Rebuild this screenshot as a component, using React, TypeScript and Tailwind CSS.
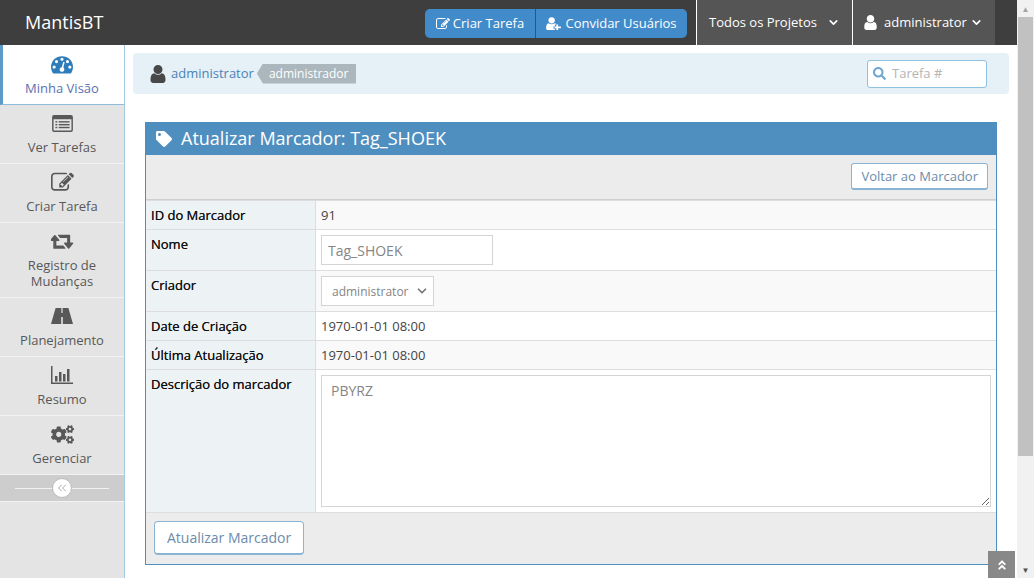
import { ChevronDown, ChevronsLeft } from 'lucide-react';
import { FaAngleDoubleUp, FaCogs, FaSearch, FaTag } from 'react-icons/fa';

type IconProps = { className?: string };

// Font Awesome 4 shapes, the icon packages only carry the newer redraws
function GaugeIcon({ className }: IconProps) {
  return (
    <svg viewBox="0 0 1792 1792" fill="currentColor" className={className}>
      <path d="M384 1152q0-53-37.5-90.5t-90.5-37.5-90.5 37.5-37.5 90.5 37.5 90.5 90.5 37.5 90.5-37.5 37.5-90.5zm192-448q0-53-37.5-90.5t-90.5-37.5-90.5 37.5-37.5 90.5 37.5 90.5 90.5 37.5 90.5-37.5 37.5-90.5zm428 481l101-382q6-26-7.5-48.5t-38.5-29.5-48 6.5-30 39.5l-101 382q-60 5-107 43.5t-63 98.5q-20 77 20 146t117 89 146-20 89-117q16-60-6-117t-72-91zm660-33q0-53-37.5-90.5t-90.5-37.5-90.5 37.5-37.5 90.5 37.5 90.5 90.5 37.5 90.5-37.5 37.5-90.5zm-640-640q0-53-37.5-90.5t-90.5-37.5-90.5 37.5-37.5 90.5 37.5 90.5 90.5 37.5 90.5-37.5 37.5-90.5zm448 192q0-53-37.5-90.5t-90.5-37.5-90.5 37.5-37.5 90.5 37.5 90.5 90.5 37.5 90.5-37.5 37.5-90.5zm320 448q0 261-141 483-19 29-54 29h-1402q-35 0-54-29-141-221-141-483 0-182 71-348t191-286 286-191 348-71 348 71 286 191 191 286 71 348z" />
    </svg>
  );
}

function ListAltIcon({ className }: IconProps) {
  return (
    <svg viewBox="0 0 22 18" fill="currentColor" className={className}>
      <path
        fillRule="evenodd"
        d="M2 0h18a2 2 0 0 1 2 2v14a2 2 0 0 1-2 2H2a2 2 0 0 1-2-2V2a2 2 0 0 1 2-2zM1.5 4.5V15.5a1 1 0 0 0 1 1h17a1 1 0 0 0 1-1V4.5z"
      />
      <rect x="3.5" y="6.5" width="2" height="1.5" />
      <rect x="3.5" y="9.5" width="2" height="1.5" />
      <rect x="3.5" y="12.5" width="2" height="1.5" />
      <rect x="7" y="6.5" width="11.5" height="1.5" />
      <rect x="7" y="9.5" width="11.5" height="1.5" />
      <rect x="7" y="12.5" width="11.5" height="1.5" />
    </svg>
  );
}

function EditIcon({ className }: IconProps) {
  return (
    <svg viewBox="0 0 1792 1792" fill="currentColor" className={className}>
      <path d="M888 1184l116-116-152-152-116 116v56h96v96h56zm440-720q-16-16-33 1l-350 350q-17 17-1 33t33-1l350-350q17-17 1-33zm80 594v190q0 119-84.5 203.5t-203.5 84.5h-832q-119 0-203.5-84.5t-84.5-203.5v-832q0-119 84.5-203.5t203.5-84.5h832q63 0 117 25 15 7 18 23 3 17-9 29l-49 49q-14 14-32 8-23-6-45-6h-832q-66 0-113 47t-47 113v832q0 66 47 113t113 47h832q66 0 113-47t47-113v-126q0-13 9-22l64-64q15-15 35-7t20 29zm-96-738l288 288-672 672h-288v-288zm444 132l-92 92-288-288 92-92q28-28 68-28t68 28l152 152q28 28 28 68t-28 68z" />
    </svg>
  );
}

function RetweetIcon({ className }: IconProps) {
  return (
    <svg viewBox="0 0 1920 1792" fill="currentColor" className={className}>
      <path d="M1216 1504q0 13-9.5 22.5t-22.5 9.5h-960q-8 0-13.5-2t-9-7-5.5-8-3-11.5-1-11.5v-600h-192q-26 0-45-19t-19-45q0-24 15-41l320-384q19-22 49-22t49 22l320 384q15 17 15 41 0 26-19 45t-45 19h-192v384h576q16 0 25 11l160 192q7 11 7 21zm640-416q0 24-15 41l-320 384q-20 23-49 23t-49-23l-320-384q-15-17-15-41 0-26 19-45t45-19h192v-384h-576q-16 0-25-12l-160-192q-7-9-7-20 0-13 9.5-22.5t22.5-9.5h960q8 0 13.5 2t9 7 5.5 8 3 11.5 1 11.5v600h192q26 0 45 19t19 45z" />
    </svg>
  );
}

function RoadIcon({ className }: IconProps) {
  return (
    <svg viewBox="0 0 22 16" fill="currentColor" className={className}>
      <path
        fillRule="evenodd"
        d="M4.6 0h12.8L22 16H0zM10.4 0v5h1.2V0zM10.2 9v7h1.6V9z"
      />
    </svg>
  );
}

function ChartIcon({ className }: IconProps) {
  return (
    <svg viewBox="0 0 22 18" fill="currentColor" className={className}>
      <rect x="0" y="0" width="1.5" height="18" />
      <rect x="0" y="16.5" width="22" height="1.5" />
      <rect x="4" y="10" width="2.5" height="5.5" />
      <rect x="8" y="6" width="2.5" height="9.5" />
      <rect x="12" y="8" width="2.5" height="7.5" />
      <rect x="16" y="3" width="2.5" height="12.5" />
    </svg>
  );
}

function UserIcon({ className }: IconProps) {
  return (
    <svg viewBox="256 128 1280 1536" fill="currentColor" className={className}>
      <path d="M1536 1399q0 109-62.5 187t-150.5 78h-854q-88 0-150.5-78t-62.5-187q0-85 8.5-160.5t31.5-152 58.5-131 94-89 134.5-34.5q131 128 313 128t313-128q76 0 134.5 34.5t94 89 58.5 131 31.5 152 8.5 160.5zm-256-887q0 159-112.5 271.5t-271.5 112.5-271.5-112.5-112.5-271.5 112.5-271.5 271.5-112.5 271.5 112.5 112.5 271.5z" />
    </svg>
  );
}

function UserPlusIcon({ className }: IconProps) {
  return (
    <svg viewBox="0 0 16 14" fill="currentColor" className={className}>
      <circle cx="6" cy="3.6" r="3.4" />
      <path d="M2.6 6.8q3.4 2.2 6.8 0 1 .2 1.7 1.2H9.5v2H8v2.6h1.5V14H1.4Q0 14 0 12.4 0 7.4 2.6 6.8z" />
      <path d="M11 8h2v2.2h3v2h-3v1.8h-2v-1.8H9v-2h2z" />
    </svg>
  );
}

const menu = [
  { label: 'Minha Visão', icon: GaugeIcon, active: true, size: 'w-[22px] h-[22px]' },
  { label: 'Ver Tarefas', icon: ListAltIcon, size: 'w-[21px] h-[17px]' },
  { label: 'Criar Tarefa', icon: EditIcon, size: 'w-[23px] h-[23px]' },
  { label: 'Registro de Mudanças', icon: RetweetIcon, size: 'w-[23px] h-[22px]' },
  { label: 'Planejamento', icon: RoadIcon, size: 'w-[22px] h-[16px]' },
  { label: 'Resumo', icon: ChartIcon, size: 'w-[22px] h-[18px]' },
  { label: 'Gerenciar', icon: FaCogs, size: 'w-[23px] h-[21px]' },
];

function Sidebar() {
  return (
    <aside className="w-[125px] shrink-0 bg-[#e4e4e4] border-r border-[#a5cbe4]">
      {menu.map((item) => (
        <div
          key={item.label}
          className={`flex flex-col items-center border-b text-[13px] leading-[16px] text-center ${
            item.active
              ? 'bg-white border-l-[3px] border-l-[#5b9ac9] border-b-[#8fbcdc] text-[#5a72b0] pl-[9px] pr-3 pt-[8px] pb-[8px]'
              : 'border-b-[#f2f2f2] text-[#585858] px-3 pt-[7px] pb-[8px]'
          }`}
        >
          <span className="h-[22px] flex items-center justify-center">
            <item.icon className={`${item.size} ${item.active ? 'text-[#2f7cba]' : 'text-[#585858]'}`} />
          </span>
          <span className="mt-[5px] w-[100px]">{item.label}</span>
        </div>
      ))}
      <div className="h-[27px] bg-[#cdcdcd] border-b border-[#f2f2f2] flex items-center justify-center relative">
        <div className="w-[94px] h-px bg-[#f2f2f2]" />
        <span className="absolute w-5 h-5 rounded-full bg-white border border-[#bbb] flex items-center justify-center text-[#999]">
          <ChevronsLeft className="w-[14px] h-[14px]" strokeWidth={1.5} />
        </span>
      </div>
    </aside>
  );
}

function Row({ label, h, children, odd }: { label: string; h: string; children: React.ReactNode; odd?: boolean }) {
  return (
    <div className={`flex border-b border-[#dddddd] ${h}`}>
      <div className="w-[170px] shrink-0 bg-[#edf3f4] border-r border-[#dddddd] px-[5px] pt-[5px] text-[13px] leading-[19px] font-medium text-[#111] [text-shadow:0_0_0.5px_#222]">
        {label}
      </div>
      <div className={`flex-1 px-[5px] pt-[5px] text-[13px] leading-[19px] text-[#444] ${odd ? 'bg-[#f9f9f9]' : 'bg-white'}`}>
        {children}
      </div>
    </div>
  );
}

export default function App() {
  return (
    <div className="h-[578px] w-[1034px] overflow-hidden flex font-['Open_Sans',sans-serif] bg-white">
      <div className="w-[1017px] shrink-0 flex flex-col relative">
        {/* Top bar */}
        <header className="h-[45px] shrink-0 bg-[#3e3e3e] flex items-stretch pr-[22px] text-white">
          <div className="pl-[25px] text-[18px] leading-[45px] flex-1">MantisBT</div>
          <div className="flex self-start mt-[9px] h-[29px] mr-[9px] rounded-[5px] overflow-hidden bg-[#428bca] text-[13px] text-white">
            <span className="w-[111px] flex items-center justify-center gap-[3px] border-r border-[#3a3a3a]/70">
              <EditIcon className="w-[14px] h-[14px]" /> Criar Tarefa
            </span>
            <span className="w-[151px] flex items-center justify-center gap-1">
              <UserPlusIcon className="w-[15px] h-[13px]" /> Convidar Usuários
            </span>
          </div>
          <div className="w-[156px] bg-[#555555] border-l border-white flex items-center pl-3 text-[13px]">
            Todos os Projetos
            <ChevronDown className="w-[13px] h-[13px] ml-[10px]" strokeWidth={3} />
          </div>
          <div className="w-[143px] bg-[#555555] border-l border-white flex items-center pl-[11px] text-[13px]">
            <UserIcon className="w-[13px] h-[15px] mr-[7px] -mt-[1px]" />
            administrator
            <ChevronDown className="w-[13px] h-[13px] ml-[3px]" strokeWidth={3} />
          </div>
        </header>

        <div className="flex flex-1 min-h-0">
          <Sidebar />
          <main className="flex-1 min-w-0 pl-2 pr-2 pt-2">
            {/* Breadcrumbs */}
            <div className="h-[41px] bg-[#e5f0f7] rounded-[4px] flex items-center pl-[17px] pr-[22px] text-[13px]">
              <UserIcon className="w-[16px] h-[18px] text-[#484848] mr-[5px]" />
              <span className="text-[#4a82b5]">administrator</span>
              <span className="ml-[3px] h-5 pl-[12px] pr-[8px] bg-[#abb7bd] text-white text-[12px] leading-5 [clip-path:polygon(6px_0,100%_0,100%_100%,6px_100%,0_50%)]">
                administrador
              </span>
              <div className="ml-auto w-[120px] h-[28px] bg-white border border-[#8fc1e3] rounded-[3px] flex items-center pl-[5px] text-[13px] text-[#b5b5b5]">
                <FaSearch className="w-[13px] h-[13px] text-[#6fa7d1] mr-[6px]" />
                Tarefa #
              </div>
            </div>

            {/* Panel */}
            <section className="mt-[28px] ml-[12px] mr-[12px] border border-[#4f8fc0] border-t-0">
              <h1 className="h-[33px] -mx-px bg-[#4f8fc0] flex items-center pl-[11px] text-white text-[18px] font-normal">
                <FaTag className="w-[16px] h-[16px] mr-[9px]" />
                Atualizar Marcador: Tag_SHOEK
              </h1>
              <div className="h-[45px] bg-[#ececec] border-b border-[#cfcfcf] flex items-start justify-end pt-[8px] pr-[8px]">
                <button className="h-[27px] px-[9px] bg-white border border-[#8ab4d4] border-b-2 rounded-[3px] text-[13px] leading-[22px] text-[#6b8cab]">
                  Voltar ao Marcador
                </button>
              </div>
              <div className="border-t border-[#dddddd]">
                <Row label="ID do Marcador" h="h-[29px]" odd>91</Row>
                <Row label="Nome" h="h-[41px]">
                  <input
                    readOnly
                    value="Tag_SHOEK"
                    className="w-[172px] h-[30px] border border-[#d5d5d5] px-[6px] text-[14px] text-[#858585] outline-none"
                  />
                </Row>
                <Row label="Criador" h="h-[41px]" odd>
                  <div className="w-[113px] h-[30px] border border-[#d5d5d5] bg-white flex items-center pl-[10px] text-[12px] text-[#858585]">
                    administrator
                    <ChevronDown className="w-[14px] h-[14px] ml-[6px] text-[#777]" strokeWidth={3} />
                  </div>
                </Row>
                <Row label="Date de Criação" h="h-[29px]">1970-01-01 08:00</Row>
                <Row label="Última Atualização" h="h-[29px]" odd>1970-01-01 08:00</Row>
                <Row label="Descrição do marcador" h="h-[143px]">
                  <textarea
                    readOnly
                    value="PBYRZ"
                    className="block w-full h-[132px] border border-[#d5d5d5] px-[9px] py-[5px] text-[14px] leading-[20px] text-[#858585] outline-none"
                  />
                </Row>
              </div>
              <div className="h-[51px] bg-[#ececec] pl-[8px] pt-[8px]">
                <button className="h-[34px] px-[12px] bg-white border border-[#8ab4d4] border-b-2 rounded-[4px] text-[14px] text-[#6b8cab]">
                  Atualizar Marcador
                </button>
              </div>
            </section>
          </main>
        </div>

        <span className="absolute left-[988px] top-[551px] w-[27px] h-[27px] bg-[#888888] flex items-center justify-center text-white">
          <FaAngleDoubleUp className="w-3 h-3" />
        </span>
      </div>

      {/* Window scrollbar */}
      <div className="w-[17px] shrink-0 bg-[#f1f1f1] flex flex-col items-center">
        <span className="h-[17px] flex items-center text-[#a3a3a3] text-[8px] leading-none">▲</span>
        <div className="w-[15px] h-[439px] bg-[#c1c1c1]" />
        <span className="mt-auto h-[17px] flex items-center text-[#505050] text-[8px] leading-none">▼</span>
      </div>
    </div>
  );
}
